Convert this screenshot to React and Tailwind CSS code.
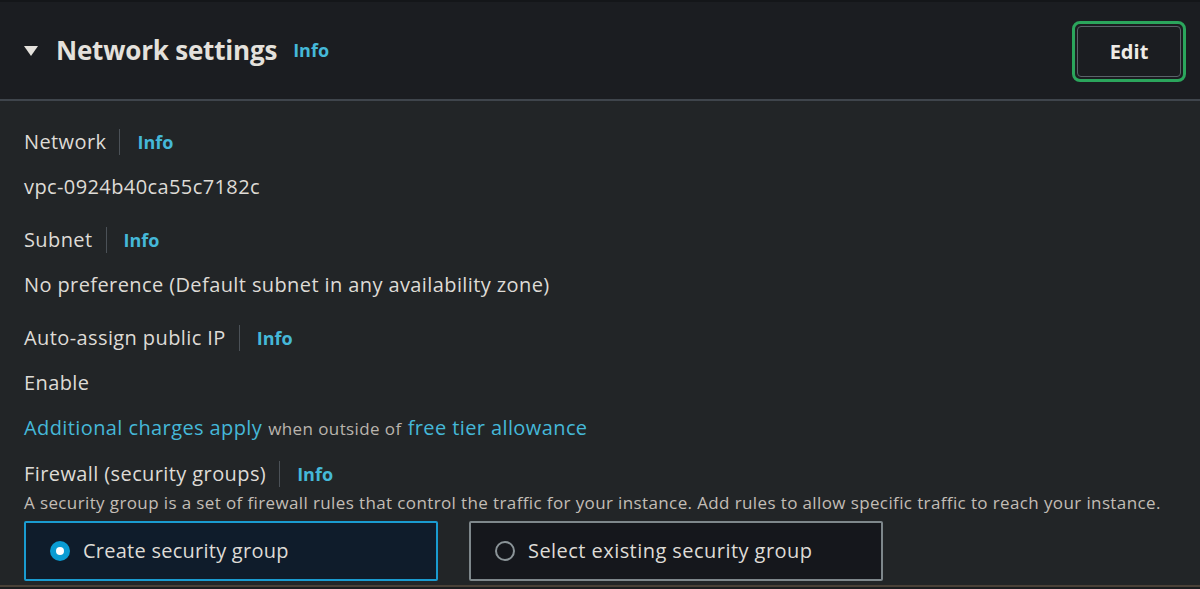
export default function App() {
  const font = { fontFamily: '"Open Sans", "Noto Sans", Arial, sans-serif' };
  const Label = ({ children }) => (
    <div className="flex items-center h-[30px]">
      <span className="text-[20px] font-medium tracking-[0.4px] text-[#dedbd6]">{children}</span>
      <span className="ml-[13px] mr-[17px] w-px h-[26px] bg-[#4b5157]"></span>
      <span className="text-[18px] font-bold text-[#45b8d8]">Info</span>
    </div>
  );
  const val = "h-[30px] flex items-center text-[20px] font-medium tracking-[0.4px] text-[#dedbd6]";
  return (
    <div className="w-[1200px] h-[589px] overflow-hidden bg-[#1c1e21] flex flex-col" style={font}>
      <div className="h-[2px] bg-[#141619]"></div>
      <div className="h-[99px] shrink-0 bg-[#1b1d21] flex items-center pl-[24px] pr-[14px] border-b-2 border-[#3f454c]">
        <svg width="14" height="12" viewBox="0 0 14 12" className="mr-[18px]">
          <polygon points="0,1 14,1 7,11" fill="#e4e1dc" />
        </svg>
        <span className="text-[26px] font-bold text-[#e4e1dc] tracking-[-0.2px]">Network settings</span>
        <span className="ml-[16px] text-[18px] font-bold text-[#45b8d8]">Info</span>
        <div className="ml-auto mt-[2px] rounded-[8px] border-[3px] border-[#2ba55c] p-[2px]">
          <div className="w-[104px] h-[51px] rounded-[4px] border border-[#5b636a] bg-[#1b1d21] flex items-center justify-center text-[20px] font-bold text-[#eeebe6]">
            Edit
          </div>
        </div>
      </div>
      <div className="flex-1 bg-[#222527] pl-[24px] pt-[26px] flex flex-col">
        <Label>Network</Label>
        <div className={"mt-[15px] " + val}>vpc-0924b40ca55c7182c</div>
        <div className="mt-[23px]"><Label>Subnet</Label></div>
        <div className={"mt-[15px] " + val}>No preference (Default subnet in any availability zone)</div>
        <div className="mt-[23px]"><Label>Auto-assign public IP</Label></div>
        <div className={"mt-[15px] " + val}>Enable</div>
        <div className="mt-[15px] h-[30px] flex items-baseline font-medium tracking-[0.4px]">
          <span className="text-[20px] text-[#45b8d8]">Additional charges apply</span>
          <span className="text-[17px] text-[#b9b4ad] mx-[6px]">when outside of</span>
          <span className="text-[20px] text-[#45b8d8]">free tier allowance</span>
        </div>
        <div className="mt-[16px]"><Label>Firewall (security groups)</Label></div>
        <div className="mt-[2px] h-[24px] flex items-center text-[17px] font-medium tracking-[0.38px] text-[#c2bdb6] whitespace-nowrap">
          A security group is a set of firewall rules that control the traffic for your instance. Add rules to allow specific traffic to reach your instance.
        </div>
        <div className="mt-[6px] flex gap-[31px]">
          <div className="w-[414px] h-[60px] rounded-[2px] border-2 border-[#1a9bd0] bg-[#0f1c2b] flex items-center pl-[24px]">
            <span className="w-[20px] h-[20px] rounded-full bg-[#0a9cd3] flex items-center justify-center">
              <span className="w-[8px] h-[8px] rounded-full bg-white"></span>
            </span>
            <span className="ml-[13px] text-[20px] font-medium tracking-[0.25px] text-[#dedbd6]">Create security group</span>
          </div>
          <div className="w-[414px] h-[60px] rounded-[2px] border-2 border-[#7e878b] bg-[#15171c] flex items-center pl-[24px]">
            <span className="w-[20px] h-[20px] rounded-full border-2 border-[#8b9498]"></span>
            <span className="ml-[13px] text-[20px] font-medium tracking-[0.45px] text-[#dedbd6]">Select existing security group</span>
          </div>
        </div>
      </div>
      <div className="h-[2px] shrink-0 bg-[#4a4137]"></div>
      <div className="h-[2px] shrink-0 bg-[#1c1e20]"></div>
    </div>
  );
}
